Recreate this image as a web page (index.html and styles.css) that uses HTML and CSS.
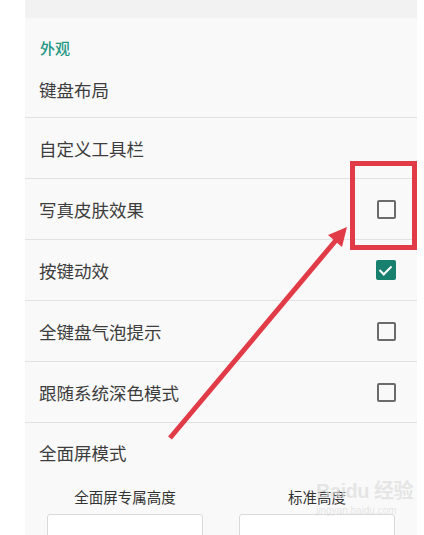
FILE: index.html
```html
<!DOCTYPE html>
<html lang="zh-CN">
<head>
  <meta charset="UTF-8">
  <meta name="viewport" content="width=device-width, initial-scale=1.0">
  <title>外观设置</title>
  <link rel="stylesheet" href="styles.css">
</head>
<body>
  <div class="panel">
    <div class="top-strip"></div>
    <div class="category">外观</div>
    <div class="row first"><span>键盘布局</span></div>
    <div class="row"><span>自定义工具栏</span></div>
    <div class="row"><span>写真皮肤效果</span><i class="check"></i></div>
    <div class="row"><span>按键动效</span><i class="check on"></i></div>
    <div class="row"><span>全键盘气泡提示</span><i class="check"></i></div>
    <div class="row"><span>跟随系统深色模式</span><i class="check"></i></div>
    <div class="fullscreen">
      <div class="fs-title">全面屏模式</div>
      <div class="fs-options">
        <div class="fs-col">
          <div class="fs-label">全面屏专属高度</div>
          <div class="fs-input"></div>
        </div>
        <div class="fs-col">
          <div class="fs-label">标准高度</div>
          <div class="fs-input"></div>
        </div>
      </div>
    </div>
  </div>

  <!-- annotation drawn over the screenshot -->
  <svg class="annotation" width="424" height="535" viewBox="0 0 424 535">
    <rect x="352.5" y="163.5" width="62" height="84" fill="none" stroke="#e23b48" stroke-width="5"/>
    <line x1="170" y1="438" x2="337" y2="239" stroke="#e23b48" stroke-width="5"/>
    <polygon points="347,227 342,247 328,235" fill="#e23b48"/>
  </svg>

  <div class="watermark">
    <div class="wm-main">Baidu 经验</div>
    <div class="wm-sub">jingyan.baidu.com</div>
  </div>
</body>
</html>
```

FILE: styles.css
```css
body {
  margin: 0;
  background: #fff;
  font-family: "Noto Sans CJK SC", "Noto Sans", sans-serif;
  color: #3d3d3d;
  width: 424px;
  height: 535px;
  overflow: hidden;
  position: relative;
}
.panel {
  margin-left: 25px;
  width: 392px;
  height: 535px;
  background: #f9f9f9;
}
.top-strip {
  height: 18px;
  background: #f2f2f2;
}
.category {
  height: 44px;
  box-sizing: border-box;
  padding: 20px 0 0 15px;
  line-height: 20px;
  font-size: 15px;
  font-weight: 500;
  color: #239683;
}
.row {
  height: 61px;
  box-sizing: border-box;
  display: flex;
  align-items: center;
  justify-content: space-between;
  padding: 0 21px 0 14px;
  border-bottom: 1px solid #e2e2e2;
  font-size: 17.5px;
}
.row.first {
  height: 56px;
}
.check {
  width: 19px;
  height: 19px;
  box-sizing: border-box;
  border: 2px solid #6b6b6b;
  border-radius: 2px;
  position: relative;
}
.check.on {
  width: 20px;
  height: 20px;
  border: none;
  background: #17806e;
}
.check.on::after {
  content: "";
  position: absolute;
  left: 6px;
  top: 3px;
  width: 5px;
  height: 10px;
  border-right: 2px solid #fff;
  border-bottom: 2px solid #fff;
  transform: rotate(45deg);
}
.fullscreen {
  padding-top: 20px;
}
.fs-title {
  padding-left: 14px;
  line-height: 20px;
  font-size: 17.5px;
}
.fs-options {
  display: grid;
  grid-template-columns: 156px 156px;
  column-gap: 36px;
  padding-left: 22px;
  margin-top: 24px;
}
.fs-label {
  text-align: center;
  line-height: 20px;
  font-size: 14.5px;
  color: #333;
}
.fs-input {
  margin-top: 7px;
  height: 40px;
  background: #fff;
  border: 1px solid #d9d9d9;
  border-radius: 3px;
}
.annotation {
  position: absolute;
  top: 0;
  left: 0;
}
.watermark {
  position: absolute;
  left: 316px;
  top: 480px;
  color: rgba(220, 220, 220, 0.7);
  font-family: "Liberation Sans", "Noto Sans CJK SC", sans-serif;
}
.wm-main {
  font-size: 20px;
  font-weight: bold;
  line-height: 22px;
  letter-spacing: -0.5px;
}
.wm-sub {
  font-size: 10px;
  line-height: 12px;
  margin-top: 3px;
}
```
